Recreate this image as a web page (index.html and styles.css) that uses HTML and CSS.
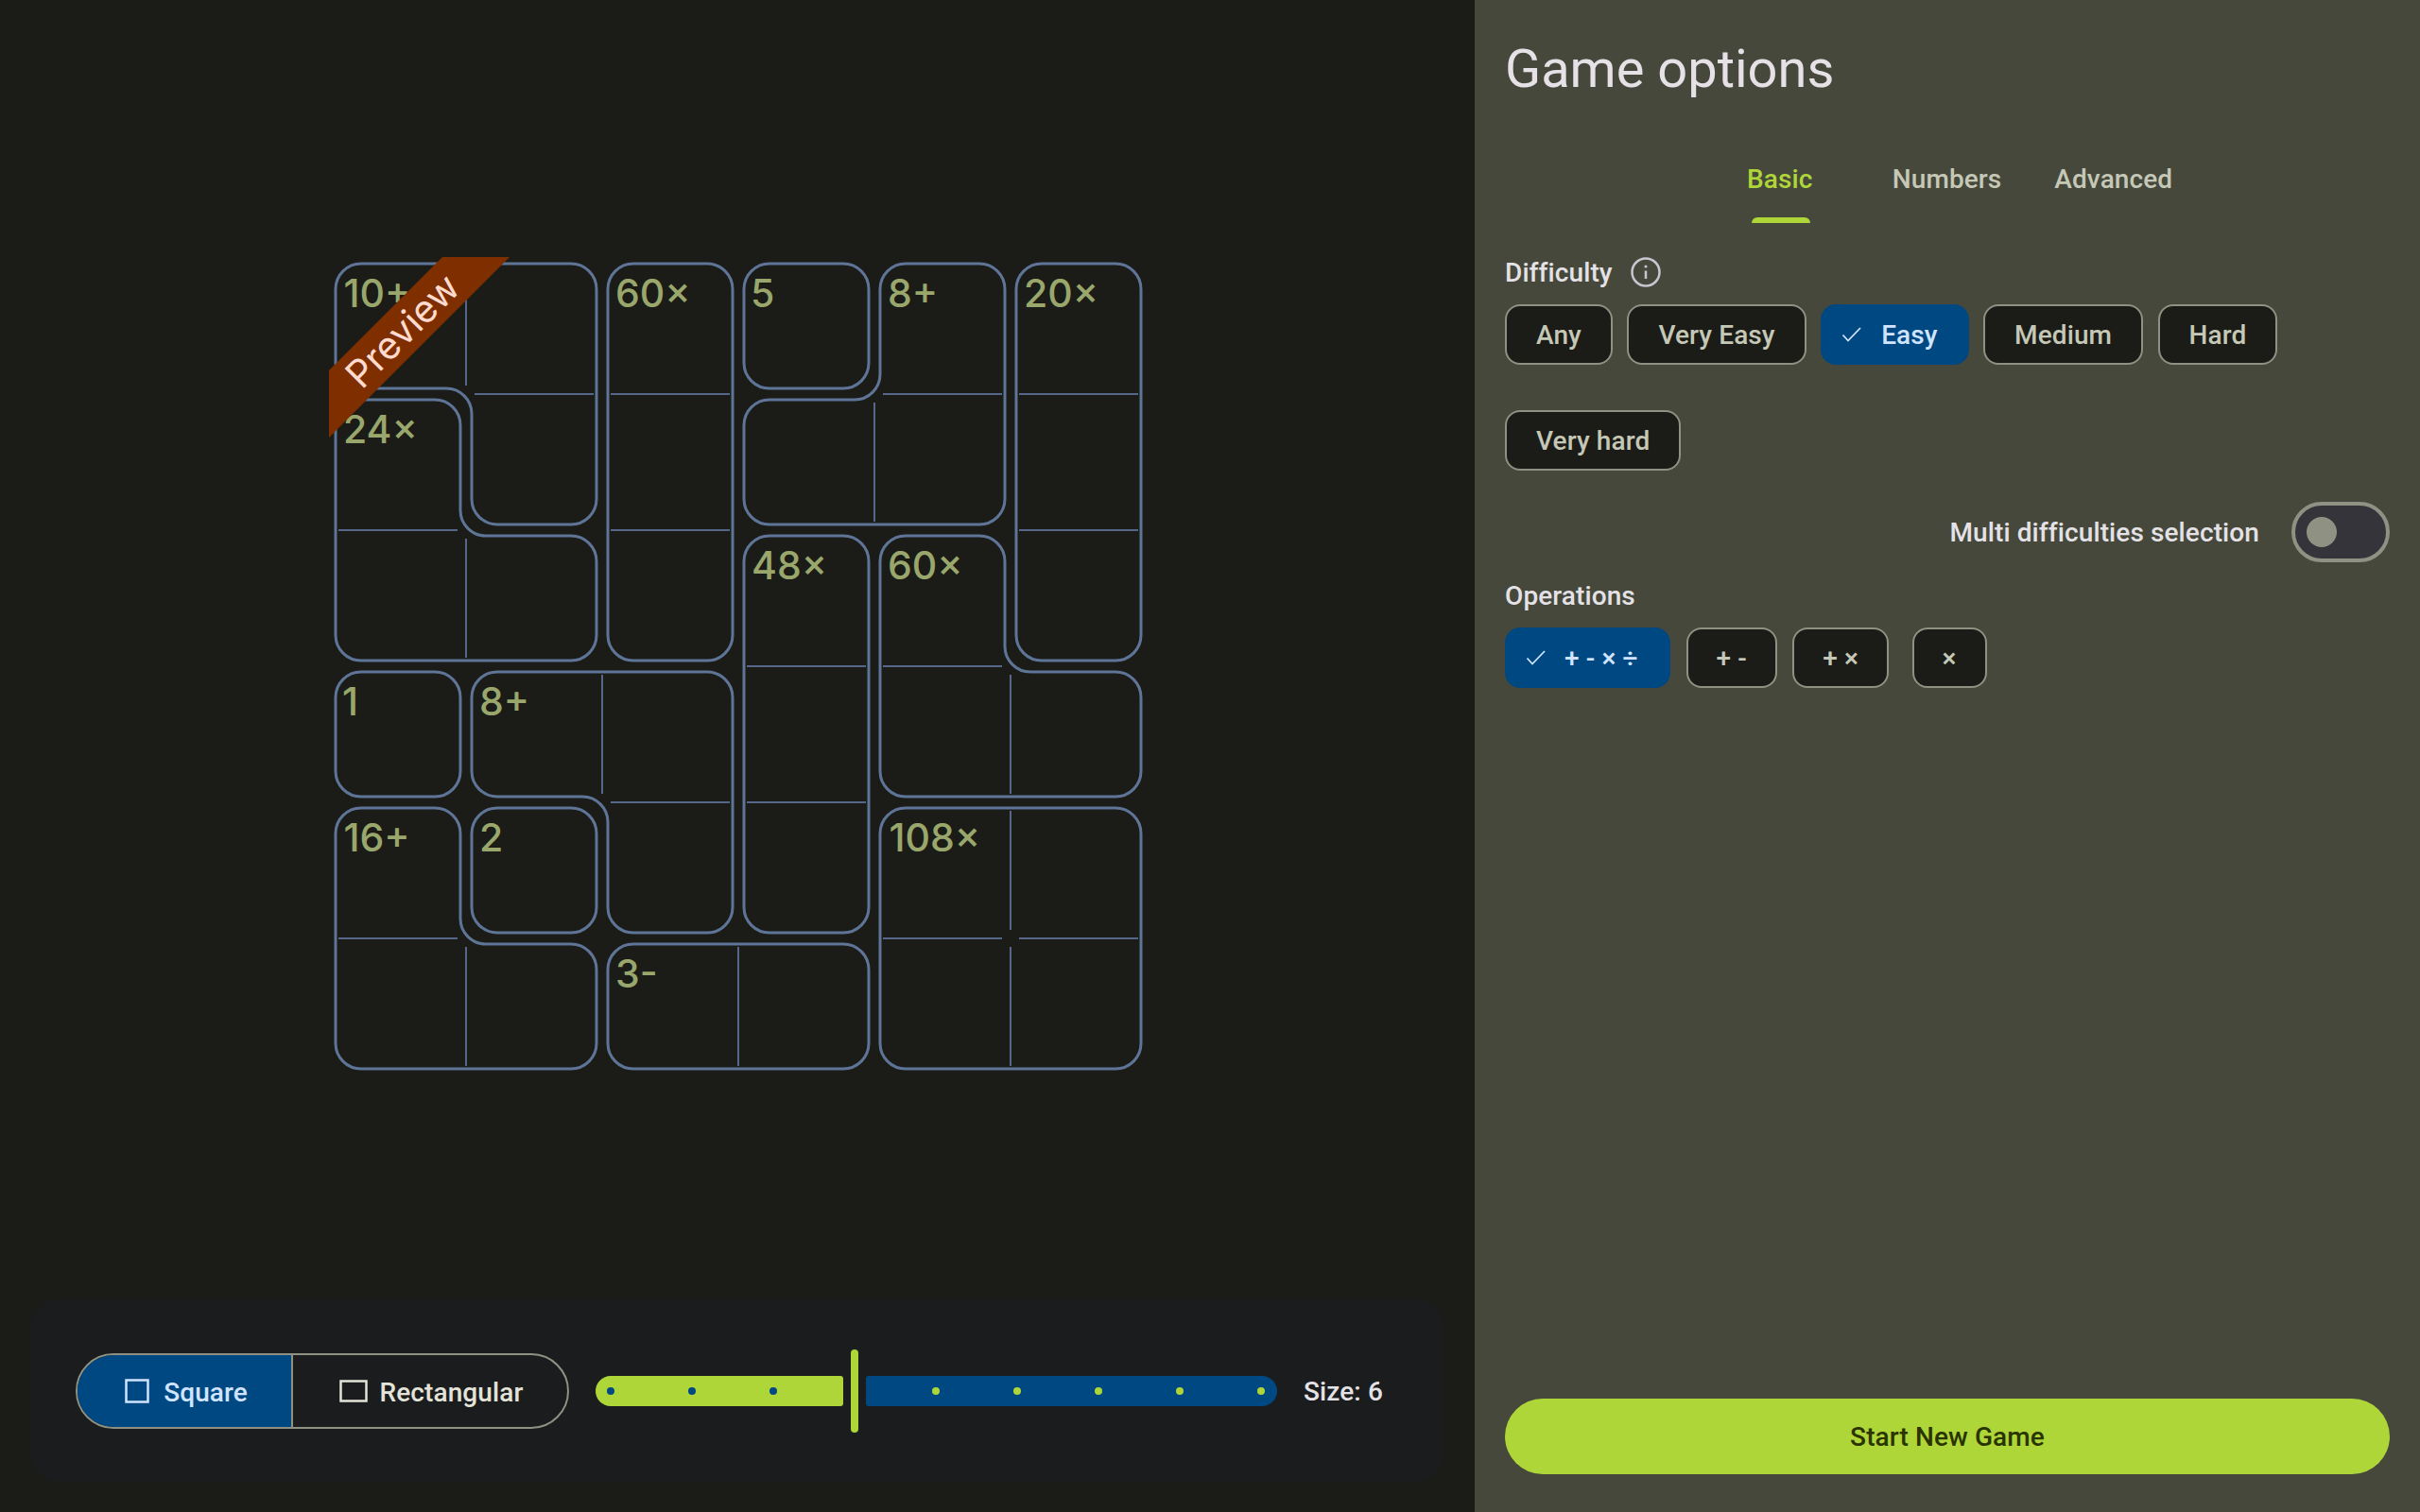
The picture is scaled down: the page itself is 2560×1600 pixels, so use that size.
FILE: index.html
```html
<!DOCTYPE html>
<html lang="en">
<head>
<meta charset="utf-8">
<title>Game options</title>
<link rel="stylesheet" href="styles.css">
</head>
<body>
<div class="app">
  <main class="stage">
    <svg class="board" width="866" height="866" viewBox="348 272 866 866">
      <g class="cages">
        <path d="M382 279H604A27 27 0 0 1 631 306V528A27 27 0 0 1 604 555H526A27 27 0 0 1 499 528V438A27 27 0 0 0 472 411H382A27 27 0 0 1 355 384V306A27 27 0 0 1 382 279Z"/>
        <path d="M382 423H460A27 27 0 0 1 487 450V540A27 27 0 0 0 514 567H604A27 27 0 0 1 631 594V672A27 27 0 0 1 604 699H382A27 27 0 0 1 355 672V450A27 27 0 0 1 382 423Z"/>
        <rect x="643" y="279" width="132" height="420" rx="27"/>
        <rect x="787" y="279" width="132" height="132" rx="27"/>
        <path d="M958 279H1036A27 27 0 0 1 1063 306V528A27 27 0 0 1 1036 555H814A27 27 0 0 1 787 528V450A27 27 0 0 1 814 423H904A27 27 0 0 0 931 396V306A27 27 0 0 1 958 279Z"/>
        <rect x="1075" y="279" width="132" height="420" rx="27"/>
        <rect x="787" y="567" width="132" height="420" rx="27"/>
        <path d="M958 567H1036A27 27 0 0 1 1063 594V684A27 27 0 0 0 1090 711H1180A27 27 0 0 1 1207 738V816A27 27 0 0 1 1180 843H958A27 27 0 0 1 931 816V594A27 27 0 0 1 958 567Z"/>
        <rect x="355" y="711" width="132" height="132" rx="27"/>
        <path d="M526 711H748A27 27 0 0 1 775 738V960A27 27 0 0 1 748 987H670A27 27 0 0 1 643 960V870A27 27 0 0 0 616 843H526A27 27 0 0 1 499 816V738A27 27 0 0 1 526 711Z"/>
        <path d="M382 855H460A27 27 0 0 1 487 882V972A27 27 0 0 0 514 999H604A27 27 0 0 1 631 1026V1104A27 27 0 0 1 604 1131H382A27 27 0 0 1 355 1104V882A27 27 0 0 1 382 855Z"/>
        <rect x="499" y="855" width="132" height="132" rx="27"/>
        <rect x="643" y="999" width="276" height="132" rx="27"/>
        <rect x="931" y="855" width="276" height="276" rx="27"/>
      </g>
      <path class="dividers" d="M493 282V408M502 417H628M358 561H484M493 570V696M646 417H772M646 561H772M934 417H1060M925 426V552M1078 417H1204M1078 561H1204M790 705H916M790 849H916M934 705H1060M1069 714V840M637 714V840M646 849H772M358 993H484M493 1002V1128M781 1002V1128M1069 858V984M1069 1002V1128M934 993H1060M1078 993H1204"/>
      <g class="labels">
        <text x="363.5" y="325">10+</text>
        <text x="651" y="325">60×</text>
        <text x="794" y="325">5</text>
        <text x="939" y="325">8+</text>
        <text x="1083" y="325">20×</text>
        <text x="363" y="469">24×</text>
        <text x="795" y="613">48×</text>
        <text x="939" y="613">60×</text>
        <text x="362" y="757">1</text>
        <text x="507" y="757">8+</text>
        <text x="363.5" y="901">16+</text>
        <text x="507" y="901">2</text>
        <text x="940.5" y="901">108×</text>
        <text x="651" y="1045">3-</text>
      </g>
      <polygon class="ribbon" points="468,272 539,272 348,463 348,392"/>
      <text class="ribbon-text" x="426" y="364" transform="rotate(-45 426 350)">Preview</text>
    </svg>
    <section class="bar">
      <div class="segmented">
        <div class="segment segment-on">
          <svg class="seg-icon" width="26" height="26" viewBox="0 0 26 26"><rect x="1.5" y="1.5" width="23" height="23"/></svg>
          <span>Square</span>
        </div>
        <div class="segment segment-off">
          <svg class="seg-icon" width="30" height="24" viewBox="0 0 30 24"><rect x="1.5" y="1.5" width="27" height="21"/></svg>
          <span>Rectangular</span>
        </div>
      </div>
      <div class="slider">
        <div class="track track-low"><i></i><i></i><i></i></div>
        <div class="handle"></div>
        <div class="track track-high"><i></i><i></i><i></i><i></i><i></i></div>
      </div>
      <span class="size">Size: 6</span>
    </section>
  </main>
  <aside class="panel">
    <h1 class="title">Game options</h1>
    <nav class="tabs">
      <div class="tab tab-on"><span>Basic</span><b></b></div>
      <div class="tab">Numbers</div>
      <div class="tab">Advanced</div>
    </nav>
    <div class="label label-info">
      <span>Difficulty</span>
      <svg width="32" height="32" viewBox="0 0 32 32"><circle class="info-ring" cx="16" cy="16" r="14.5"/><path class="info-stem" d="M16 14.5V23"/><circle class="info-dot" cx="16" cy="10" r="1.6"/></svg>
    </div>
    <div class="chips chips-difficulty">
      <div class="chip">Any</div>
      <div class="chip">Very Easy</div>
      <div class="chip chip-on"><svg class="check" width="22" height="16" viewBox="0 0 22 16"><path d="M1.5 8.5L7 14.5L20 1"/></svg>Easy</div>
      <div class="chip">Medium</div>
      <div class="chip">Hard</div>
      <div class="chip">Very hard</div>
    </div>
    <div class="multi">
      <span>Multi difficulties selection</span>
      <div class="switch"><i></i></div>
    </div>
    <div class="label label-ops">Operations</div>
    <div class="chips chips-ops">
      <div class="chip chip-on chip-op-all"><svg class="check" width="22" height="16" viewBox="0 0 22 16"><path d="M1.5 8.5L7 14.5L20 1"/></svg>+ - × ÷</div>
      <div class="chip chip-op">+ -</div>
      <div class="chip chip-op">+ ×</div>
      <div class="chip chip-op chip-op-last">×</div>
    </div>
    <button class="start">Start New Game</button>
  </aside>
</div>
</body>
</html>
```
FILE: styles.css
```css
* { box-sizing: border-box; }
html, body { margin: 0; padding: 0; }
body {
  width: 2560px;
  height: 1600px;
  overflow: hidden;
  background: #1b1c17;
  font-family: Roboto, "Liberation Sans", sans-serif;
  font-weight: 500;
  font-size: 28px;
  letter-spacing: 0.1px;
  color: #e4e2e6;
}
.app { display: flex; width: 2560px; height: 1600px; }
.stage { width: 1560px; display: flex; flex-direction: column; background: #1b1c17; }
.board { display: block; margin: 272px 0 0 348px; letter-spacing: 0; }
.cages path, .cages rect { fill: none; stroke: #5f7598; stroke-width: 3; }
.dividers { fill: none; stroke: #56688a; stroke-width: 2; }
.labels text { font-family: Inter, sans-serif; font-size: 41px; font-weight: 550; fill: #9aa76c; }
.ribbon { fill: #7f2e00; }
.ribbon-text { font-family: Inter, sans-serif; font-size: 40px; font-weight: 400; fill: #ffdbcf; text-anchor: middle; }

.bar {
  margin: auto 33px 32px 33px;
  height: 193px;
  background: #1b1c1e;
  border-radius: 28px;
  display: flex;
  align-items: center;
  padding-left: 47px;
}
.segmented {
  display: flex;
  width: 522px;
  height: 80px;
  border: 2px solid #8f9182;
  border-radius: 40px;
  overflow: hidden;
  margin-right: 28px;
}
.segment { display: flex; align-items: center; justify-content: center; }
.segment span { padding-top: 3px; }
.segment-on { width: 228px; background: #004881; color: #d1e4ff; gap: 15px; padding-left: 4px; border-right: 2px solid #8f9182; }
.segment-off { flex: 1; color: #e4e3d9; gap: 13px; padding-left: 2px; }
.seg-icon rect { fill: none; stroke: currentColor; stroke-width: 2.5; }
.slider { display: flex; align-items: center; gap: 8px; margin-right: 28px; }
.track { height: 32px; display: flex; align-items: center; gap: 78px; }
.track i { width: 8px; height: 8px; border-radius: 50%; display: block; }
.track-low { width: 262px; padding-left: 12px; background: #afd638; border-radius: 16px 3px 3px 16px; }
.track-low i { background: #004881; }
.track-high { width: 435px; padding-left: 70px; background: #004881; border-radius: 3px 16px 16px 3px; }
.track-high i { background: #afd638; }
.handle { width: 8px; height: 88px; border-radius: 4px; background: #afd638; }
.size { white-space: nowrap; padding-top: 2px; }

.panel {
  width: 1000px;
  height: 1600px;
  background: #46483b;
  padding: 0 32px 40px;
  display: flex;
  flex-direction: column;
}
.title { margin: 40px 0 0; font-size: 56px; line-height: 66px; font-weight: 400; letter-spacing: 0; color: #e5e1e6; }
.tabs { display: flex; justify-content: center; margin-top: 36px; padding-right: 2px; height: 94px; flex: none; }
.tab { padding: 0 28px; color: #c5c8b6; height: 94px; line-height: 96px; }
.tab-on { width: 182px; padding: 0; color: #afd638; display: flex; flex-direction: column; align-items: center; position: relative; }
.tab-on b { position: absolute; bottom: 0; left: 61px; width: 62px; height: 6px; border-radius: 6px 6px 0 0; background: #afd638; }
.label { height: 32px; line-height: 32px; color: #e4e2e6; }
.label-info { display: flex; align-items: center; gap: 19px; margin-top: 36px; }
.label-info span { padding-top: 2px; }
.info-ring, .info-stem { fill: none; stroke: #c8c5d0; stroke-width: 2.5; }
.info-dot { fill: #c8c5d0; }
.chips { display: flex; flex-wrap: wrap; gap: 48px 15.5px; }
.chips-difficulty { margin-top: 18px; width: 830px; }
.chip {
  height: 64px;
  padding: 0 31px;
  display: flex;
  align-items: center;
  border: 2px solid #8f9182;
  border-radius: 16px;
  background: #1b1c17;
  color: #c5c8b6;
  white-space: nowrap;
}
.chip-on { background: #004881; border-color: #004881; color: #d1e4ff; padding-left: 20px; gap: 20px; }
.check { flex: none; }
.check path { fill: none; stroke: currentColor; stroke-width: 1.8; }
.multi { display: flex; justify-content: flex-end; align-items: center; gap: 34px; margin-top: 33px; height: 64px; }
.switch { width: 104px; height: 64px; border: 4px solid #8f9182; border-radius: 32px; background: #34343a; padding: 12px; }
.switch i { display: block; width: 32px; height: 32px; border-radius: 50%; background: #8f9182; }
.label-ops { margin-top: 20px; }
.chips-ops { margin-top: 17px; gap: 48px 16.5px; }
.chip-op { padding: 0 30px; }
.chip-op-all { padding: 0 0 0 20px; width: 175px; gap: 19px; }
.chip-op-last { margin-left: 8px; }
.start {
  margin-top: auto;
  height: 80px;
  flex: none;
  border: 0;
  border-radius: 40px;
  padding-top: 2px;
  background: #afd638;
  color: #2a3400;
  letter-spacing: 0.1px;
  font: 500 28px Roboto, "Liberation Sans", sans-serif;
}
```
